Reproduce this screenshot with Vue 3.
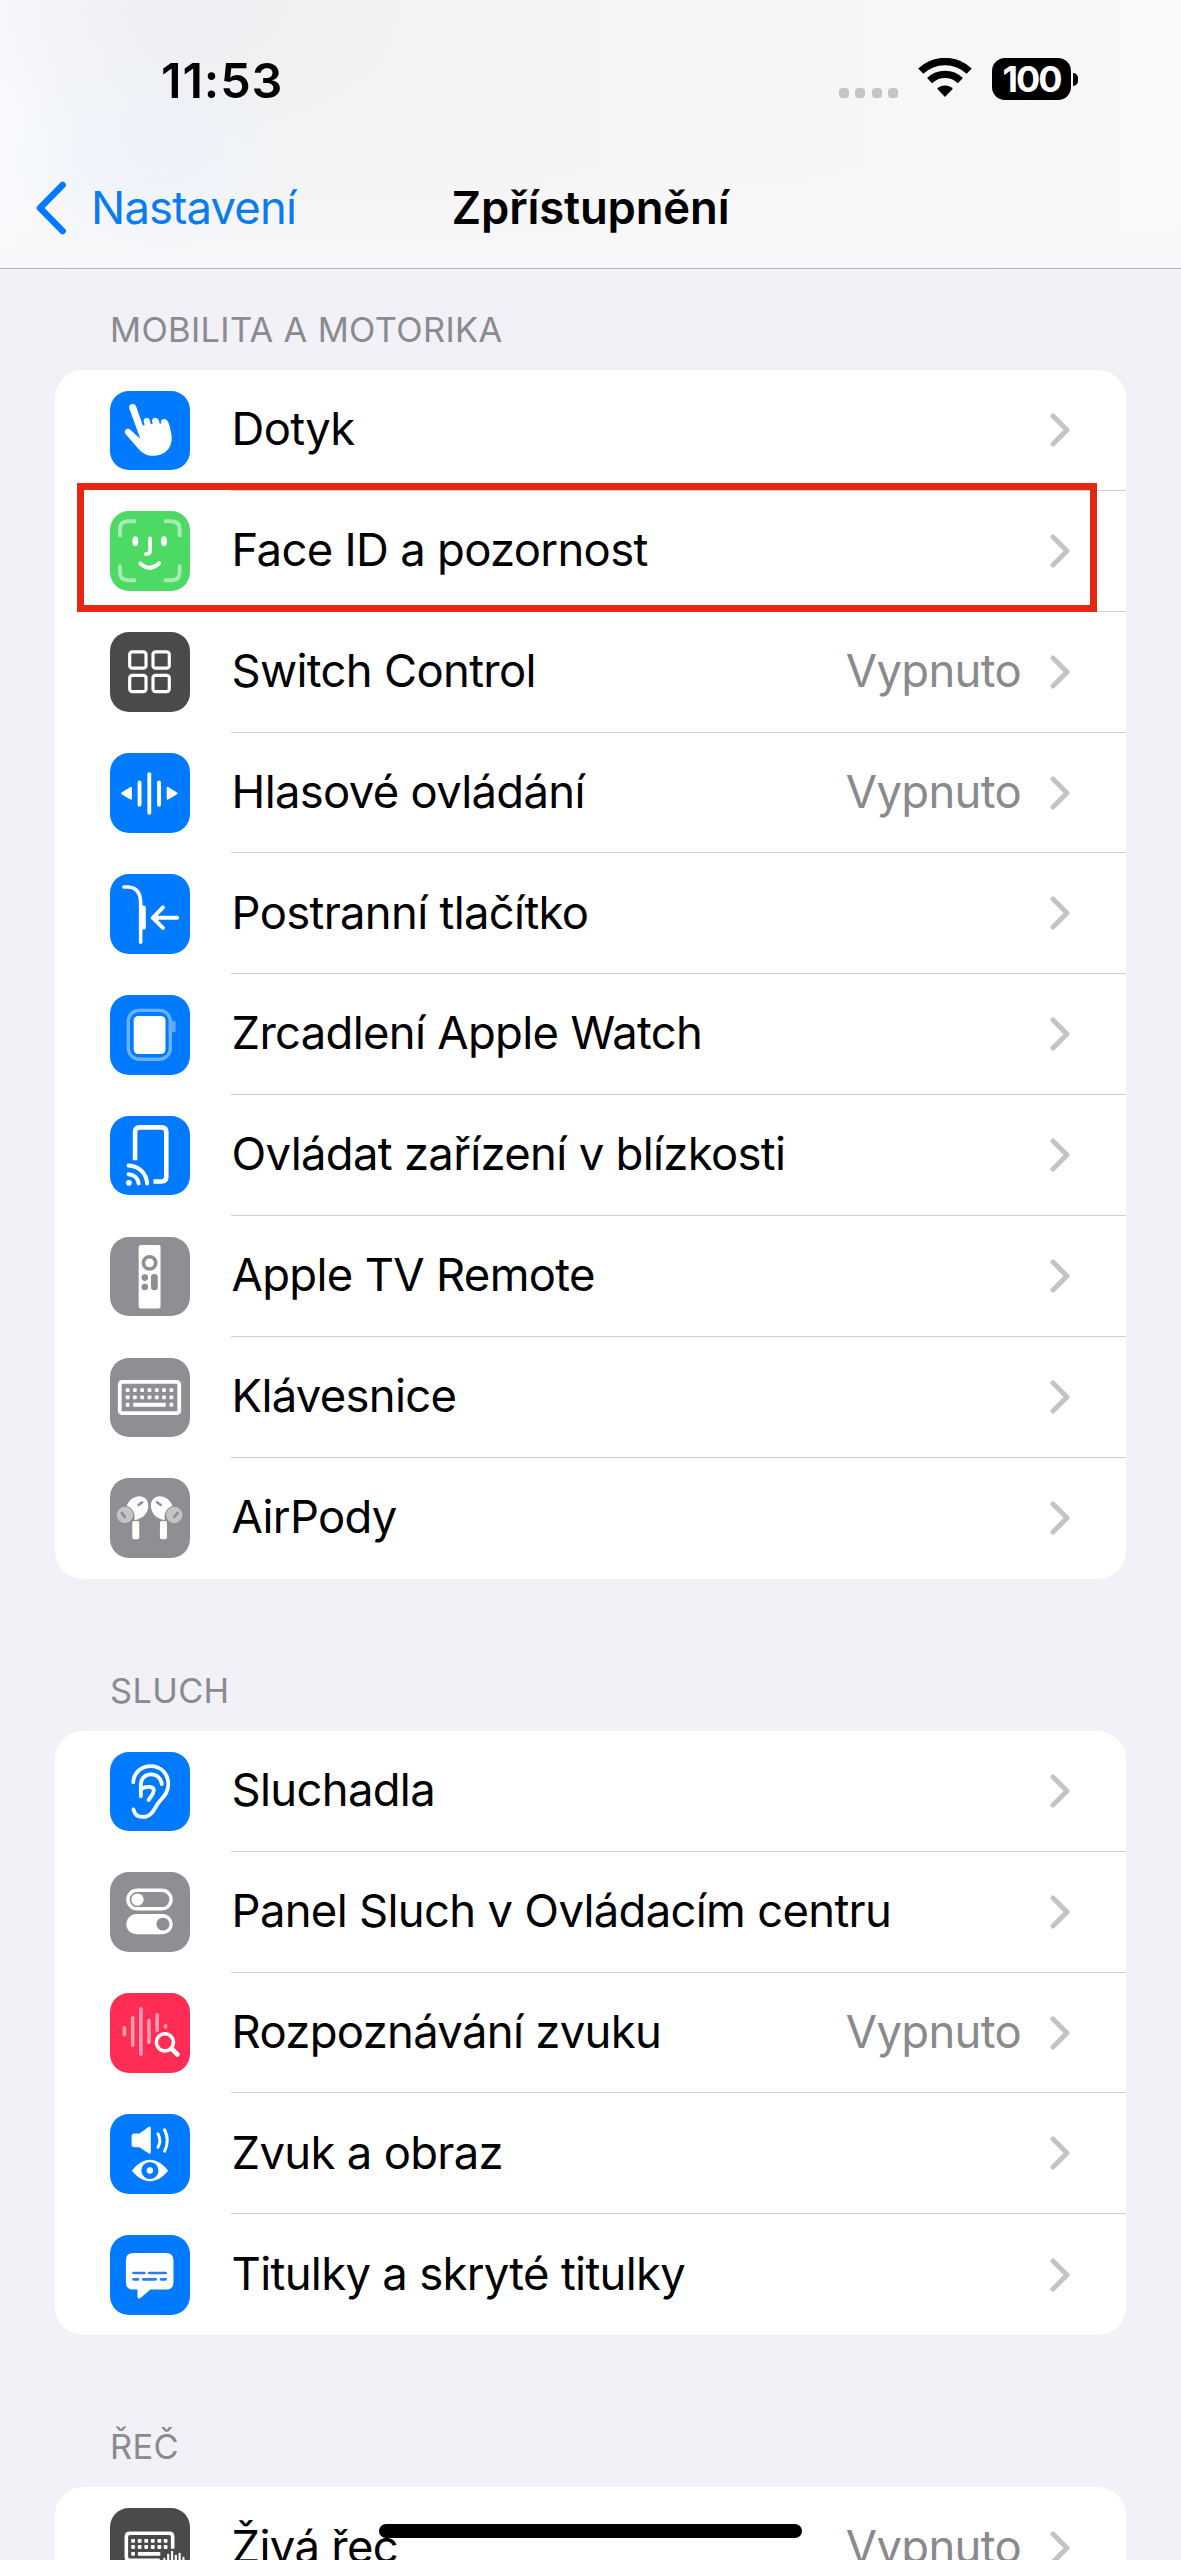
<script setup>
const keyCap = (x, y) => `<rect x="${x - 1.9}" y="${y - 1.9}" width="3.8" height="3.8" rx=".8" fill="#fff"/>`
const bar = (x, y1, y2, color, w = 3.6) =>
  `<path d="M${x} ${y1 + w / 2}V${y2 - w / 2}" stroke="${color}" stroke-width="${w}" stroke-linecap="round"/>`
const cols7 = [17.7, 25, 32.3, 39.7, 47, 54.3, 61.7]
const cols6 = [23.2, 29.8, 36.4, 43, 49.6, 55.9]

const bud = `<path d="M16.8 28C19.5 21 25 18.3 30 18.3C35.5 18.6 38.5 22.8 38.5 27.6C38.5 35 33 41.2 24.6 42.2C25.6 35 22.5 30 16.8 28Z" fill="#fff"/>
  <rect x="22.4" y="43.2" width="7" height="18.3" rx="1.8" fill="#fff"/>
  <circle cx="15" cy="37.2" r="8.2" fill="#c4c4c7"/>
  <path d="M11.8 35.2L15 39.2" stroke="#8e8e93" stroke-width="2.8" stroke-linecap="round"/>
  <path d="M28.6 27.2L32.4 24.4" stroke="#8e8e93" stroke-width="2.4" stroke-linecap="round"/>`

const glyphs = {
  touch: `<path fill="#fff" d="M19.3 17.2C18.4 12.8 24.6 11.4 26.2 15.4L33 34.8L34.8 34.2L33.8 30.5C33.8 26.3 39 25.8 40 29.5L41 33.3L43 32.8L42.2 30C42.6 26 48 25.8 49 29.5L50 32.8L51.7 32.3L51.2 30.5C52.4 27 57.4 27.2 59 32.5C60.5 37.5 62 43 62 48C62 58 54.5 65.2 43.5 65.2C36 65.2 31 61.4 26.5 55.7L15.6 43.2C13.2 39.6 17.4 36.4 20.5 39L30.5 48.3Z"/>`,
  face: `<g fill="none" stroke="#fff" stroke-width="4" stroke-linecap="round">
    <path opacity=".5" d="M10 24.5V18.5Q10 10.3 18.2 10.3H24.5M56 10.3H62Q70 10.3 70 18.5V24.5M70 55.5V61.3Q70 69.5 62 69.5H56M24.5 69.5H18.2Q10 69.5 10 61.3V55.5"/>
    <path d="M40.3 27.6V39.8Q40.3 43.3 36 43.3" stroke-width="3.8"/><path d="M30.4 52.6Q39.8 61.4 49.4 52.6"/></g>
    <ellipse cx="25.4" cy="30.3" rx="3" ry="5" fill="#fff"/><ellipse cx="54.2" cy="30.3" rx="3" ry="5" fill="#fff"/>`,
  grid: `<g fill="none" stroke="#fff" stroke-width="3.2"><rect x="19.8" y="20" width="16.4" height="16.4" rx="2.6"/><rect x="43.2" y="20" width="16.4" height="16.4" rx="2.6"/><rect x="19.8" y="43.6" width="16.4" height="16.4" rx="2.6"/><rect x="43.2" y="43.6" width="16.4" height="16.4" rx="2.6"/></g>`,
  voice: bar(29.7, 27.7, 53.9, '#fff', 3.9) + bar(39.5, 19.3, 62, '#fff', 3.9) + bar(49.3, 27.7, 53.9, '#fff', 3.9) +
    `<g fill="#fff" stroke="#fff" stroke-width="2" stroke-linejoin="round"><path d="M12.2 40.5L21 35V46Z"/><path d="M66.8 40.5L58 35V46Z"/></g>`,
  side: `<g fill="none" stroke="#fff" stroke-linecap="round" stroke-linejoin="round"><path stroke-width="3.6" d="M14 13.1H18Q30.8 13.6 30.8 29V68.5"/><path stroke-width="4" d="M67.5 44H43.5M53.2 33.6L43 44L53.2 54.2"/></g><rect x="30" y="31.7" width="6" height="24.2" rx="2" fill="#fff"/>`,
  watch: `<rect x="18.4" y="15.4" width="42.2" height="49.2" rx="11" fill="none" stroke="#6ab2ff" stroke-width="3.4"/><rect x="61.4" y="26" width="4.6" height="11.6" rx="2" fill="#5aa9ff"/><rect x="23.8" y="21" width="32" height="38.4" rx="4.5" fill="#fff"/>`,
  nearby: `<g fill="none" stroke="#fff" stroke-width="4.6"><path d="M25.2 44.5V16.2Q25.2 11.4 30 11.4H51.8Q56.6 11.4 56.6 16.2V61Q56.6 65.8 51.8 65.8H43.6"/></g><g fill="none" stroke="#fff" stroke-width="4" stroke-linecap="round"><path d="M18.6 49.8C29.5 50.6 36.6 57.6 37.4 67.9"/><path d="M18.6 58.5C24.2 58.9 28.2 62.6 28.8 67.9"/></g><circle cx="19" cy="67.2" r="2.9" fill="#fff"/>`,
  remote: `<rect x="28.8" y="8" width="22" height="63.8" rx="2" fill="#fff"/><circle cx="39.8" cy="26" r="6.2" fill="none" stroke="#8e8e93" stroke-width="3.6"/><g fill="#8e8e93"><circle cx="35" cy="40.8" r="3.3"/><circle cx="35" cy="50.2" r="3.3"/><rect x="41.2" y="37.2" width="6.8" height="16.3" rx="3.2"/></g>`,
  keyboard: `<rect x="9.8" y="23.9" width="59.8" height="31.6" rx="2.6" fill="none" stroke="#fff" stroke-width="3.8"/>` +
    cols7.map(x => keyCap(x, 32.2) + keyCap(x, 39.5)).join('') + keyCap(17.7, 47) + keyCap(61.7, 47) +
    `<rect x="23.3" y="45.1" width="32.8" height="3.8" rx=".8" fill="#fff"/>`,
  airpods: bud + `<g transform="translate(79.6 0) scale(-1 1)">${bud}</g>`,
  ear: `<g fill="none" stroke="#fff" stroke-width="3.8" stroke-linecap="round" stroke-linejoin="round"><path d="M23.4 30.4C24 20.5 31.5 14.2 41 14.2C51.3 14.2 58.6 22 58.6 32.5C58.6 42.5 51.5 46.5 47 53.5C43 60.8 40 65.2 32.8 65.2C28 65.2 24.6 62.3 23.6 57.6"/><path d="M31 44.6V32.5C31 26.5 35.5 22.4 41.2 22.4C47 22.4 51.6 26.5 52 32.3"/><path d="M31 37.2C36 34.4 44.2 34 44 38.8C43.8 43 40.4 45 38.8 48.4"/></g>`,
  toggles: `<rect x="18" y="18.4" width="43.4" height="18.6" rx="9.3" fill="none" stroke="#fff" stroke-width="3.4"/><circle cx="27.6" cy="27.8" r="6.2" fill="#fff"/><rect x="16.3" y="42.3" width="46.8" height="20.2" rx="10.1" fill="#fff"/><circle cx="53.2" cy="52.4" r="6.5" fill="#8e8e93"/>`,
  recognition: [[14.5, 33, 43.8], [22.8, 23, 54.2], [31, 14, 63.4], [39.2, 26, 51.4], [47.4, 20, 40], [55.8, 31.2, 36]].map(b => bar(...b, '#ff9fb2')).join('') +
    `<circle cx="55.2" cy="49.6" r="9.2" fill="#ff2d55" stroke="#ff2d55" stroke-width="7"/><circle cx="55.2" cy="49.6" r="8.6" fill="none" stroke="#fff" stroke-width="3.6"/><path d="M61.6 55.8L67.8 61.8" stroke="#fff" stroke-width="4.6" stroke-linecap="round"/>`,
  soundvision: `<path d="M21.7 22.4Q21.7 19.6 24.5 19.6H29.6L39 12.9Q41 12 41 14.4V38.2Q41 40.6 39 39.6L29.6 33.4H24.5Q21.7 33.4 21.7 30.6Z" fill="#fff"/><g fill="none" stroke="#fff" stroke-width="3" stroke-linecap="round"><path d="M48.2 20Q52 26.6 48.2 33.4"/><path d="M54.8 15.8Q60.4 26.4 54.8 37.4"/></g><path d="M22 57C28 49.5 34 46 40.2 46C46.4 46 52.4 49.5 58.4 57C52.4 64.2 46.4 67.5 40.2 67.5C34 67.5 28 64.2 22 57Z" fill="#fff"/><circle cx="40.1" cy="56.8" r="8.6" fill="#007aff"/><circle cx="40.1" cy="56.8" r="3.2" fill="#fff"/>`,
  captions: `<path d="M23.5 18H56.3Q63.8 18 63.8 25.5V47.4Q63.8 54.9 56.3 54.9H40.5L31 63Q27.6 65.4 27.6 61.6V54.9H23.5Q16 54.9 16 47.4V25.5Q16 18 23.5 18Z" fill="#fff"/><path d="M23.6 38.2H34.6M39.4 38.2H56M23.6 44.6H28.2M33.4 44.6H46M51.2 44.6H56" stroke="#2b7fe0" stroke-width="2.6" stroke-linecap="round"/>`,
  live: `<path d="M63 41V29Q63 25.4 59.4 25.4H20Q16.4 25.4 16.4 29V49Q16.4 52.6 20 52.6H50" fill="none" stroke="#fff" stroke-width="3.6"/>` +
    cols6.map(x => keyCap(x, 33) + keyCap(x, 39.2)).join('') + keyCap(23.2, 46) +
    `<rect x="28" y="44.2" width="22.6" height="3.7" rx=".8" fill="#fff"/>` +
    [[54.6, 50], [58.5, 46], [62.4, 43], [66.2, 47], [70, 45], [73.8, 49]].map(([x, y]) => bar(x, y, 62, '#fff', 2.2)).join('')
}

const sections = [
  {
    title: 'MOBILITA A MOTORIKA',
    rows: [
      { label: 'Dotyk', icon: 'touch', tone: 'blue' },
      { label: 'Face ID a pozornost', icon: 'face', tone: 'green', marked: true },
      { label: 'Switch Control', icon: 'grid', tone: 'dark', value: 'Vypnuto' },
      { label: 'Hlasové ovládání', icon: 'voice', tone: 'blue', value: 'Vypnuto' },
      { label: 'Postranní tlačítko', icon: 'side', tone: 'blue' },
      { label: 'Zrcadlení Apple Watch', icon: 'watch', tone: 'blue' },
      { label: 'Ovládat zařízení v blízkosti', icon: 'nearby', tone: 'blue' },
      { label: 'Apple TV Remote', icon: 'remote', tone: 'gray' },
      { label: 'Klávesnice', icon: 'keyboard', tone: 'gray' },
      { label: 'AirPody', icon: 'airpods', tone: 'gray' }
    ]
  },
  {
    title: 'SLUCH',
    rows: [
      { label: 'Sluchadla', icon: 'ear', tone: 'blue' },
      { label: 'Panel Sluch v Ovládacím centru', icon: 'toggles', tone: 'gray' },
      { label: 'Rozpoznávání zvuku', icon: 'recognition', tone: 'pink', value: 'Vypnuto' },
      { label: 'Zvuk a obraz', icon: 'soundvision', tone: 'blue' },
      { label: 'Titulky a skryté titulky', icon: 'captions', tone: 'blue' }
    ]
  },
  {
    title: 'ŘEČ',
    rows: [{ label: 'Živá řeč', icon: 'live', tone: 'dark', value: 'Vypnuto' }]
  }
]
</script>

<template>
  <div class="screen">
    <header class="top">
      <div class="status">
        <span class="time">11:53</span>
        <div class="indicators">
          <div class="signal"><i v-for="n in 4" :key="n"></i></div>
          <svg class="wifi" width="54" height="40" viewBox="0 0 54 40">
            <g fill="none" stroke="#000">
              <path d="M2.8 13.2A35 35 0 0 1 51.2 13.2" stroke-width="7.4" />
              <path d="M11.6 22.6A22 22 0 0 1 42.4 22.6" stroke-width="7.2" />
            </g>
            <path d="M27 39L19.2 30.8A11 11 0 0 1 34.8 30.8Z" />
          </svg>
          <div class="battery"><span>100</span></div>
          <i class="nub"></i>
        </div>
      </div>
      <nav class="nav">
        <a class="back">
          <svg width="32" height="54" viewBox="0 0 32 54">
            <path d="M27.6 4L5 27L27.6 50" fill="none" stroke="#007aff" stroke-width="6.6" stroke-linecap="round" stroke-linejoin="round" />
          </svg>
          <span>Nastavení</span>
        </a>
        <h1>Zpřístupnění</h1>
      </nav>
    </header>

    <main>
      <section v-for="s in sections" :key="s.title">
        <h2>{{ s.title }}</h2>
        <ul>
          <li v-for="r in s.rows" :key="r.label">
            <span class="icon" :class="r.tone">
              <svg viewBox="0 0 80 80" v-html="glyphs[r.icon]"></svg>
            </span>
            <div class="body">
              <span class="label">{{ r.label }}</span>
              <span v-if="r.value" class="value">{{ r.value }}</span>
              <svg class="chev" width="22" height="36" viewBox="0 0 22 36">
                <path d="M4 4L18 18L4 32" fill="none" stroke="#c4c4c6" stroke-width="5" stroke-linecap="round" stroke-linejoin="round" />
              </svg>
            </div>
            <div v-if="r.marked" class="mark"></div>
          </li>
        </ul>
      </section>
    </main>
    <div class="home"></div>
  </div>
</template>

<style>
body { margin: 0; background: #f1f1f7; }
</style>

<style scoped>
.screen {
  position: relative;
  width: 1181px;
  height: 2560px;
  overflow: hidden;
  background: #f1f1f7;
  color: #000;
  font-family: Inter, "Liberation Sans", sans-serif;
}
.top {
  box-sizing: border-box;
  height: 269px;
  border-bottom: 1px solid #b5b5b8;
  background:
    radial-gradient(ellipse 150px 100px at 155px 155px, rgba(235, 242, 252, .7), rgba(235, 242, 252, 0)),
    radial-gradient(ellipse 260px 150px at 190px 10px, rgba(236, 238, 241, .8), rgba(236, 238, 241, 0)),
    linear-gradient(to bottom, rgba(248, 248, 250, 0) 60%, #f8f8fa),
    linear-gradient(to right, #f8fafd 0, #f2f3f5 150px, #f3f3f3 450px, #f6f6f6 700px, #f7f7f8 1000px, #f9f9fb 1181px);
}
.status {
  display: flex;
  justify-content: space-between;
  align-items: flex-start;
  height: 160px;
  padding: 0 103px 0 161px;
}
.time { font-size: 48.5px; font-weight: 600; line-height: 60px; margin-top: 51px; letter-spacing: .9px; }
.indicators { display: flex; margin-top: 58px; }
.signal { display: flex; gap: 6.4px; margin: 30px 20px 0 0; }
.signal i { width: 10px; height: 10px; border-radius: 3.5px; background: #c5c5c6; }
.wifi { margin-right: 20px; }
.battery {
  width: 79px;
  height: 42px;
  border-radius: 13px;
  background: #000;
  color: #fff;
  text-align: center;
  font-size: 36px;
  font-weight: 700;
  line-height: 42px;
  letter-spacing: -2px;
}
.nub { width: 5px; height: 13px; margin: 15px 0 0 2px; border-radius: 0 6px 6px 0; background: #000; }
.nav { display: grid; grid-template-columns: 1fr auto 1fr; align-items: center; height: 95px; }
.back { display: flex; align-items: center; padding-left: 35px; color: #0b7bf0; font-size: 45.4px; letter-spacing: -.8px; }
.back span { margin-left: 24px; }
h1 { margin: 0; font-size: 45.4px; font-weight: 600; letter-spacing: -.15px; }
section { padding: 0 55px; }
h2 {
  display: flex;
  align-items: flex-end;
  box-sizing: border-box;
  height: 152.3px;
  margin: 0;
  padding: 0 0 19px 55px;
  color: #8a8a8f;
  font-size: 34.4px;
  font-weight: 400;
  line-height: 42px;
  letter-spacing: .35px;
}
section:first-child h2 { height: 101px; }
ul { margin: 0; padding: 0; list-style: none; border-radius: 28px; background: #fff; }
li { position: relative; display: flex; align-items: center; height: 120.87px; padding-left: 55px; }
.icon { width: 79.6px; height: 79.6px; border-radius: 19px; overflow: hidden; }
.icon svg { display: block; width: 100%; height: 100%; }
.blue { background: #007aff; }
.green { background: #4cd964; }
.dark { background: #4a4a4b; }
.gray { background: #8e8e93; }
.pink { background: #ff2d55; }
.body {
  box-sizing: border-box;
  flex: 1;
  display: flex;
  align-items: center;
  height: 100%;
  margin-left: 41px;
  padding-right: 55px;
  border-bottom: 1px solid #cfcfd1;
}
li:last-child .body { border-bottom: 0; }
.label, .value { font-size: 45.4px; line-height: 56px; padding-bottom: 1.6px; letter-spacing: -.68px; white-space: nowrap; }
.label { padding-left: 1px; }
.value { margin-left: auto; color: #8a8a8d; }
.chev { margin-left: auto; }
.value + .chev { margin-left: 28px; }
.mark {
  position: absolute;
  box-sizing: border-box;
  left: 22px;
  top: -7.6px;
  width: 1020px;
  height: 128.6px;
  border: 7.4px solid #e62713;
}
.home {
  position: absolute;
  left: 379px;
  top: 2524px;
  width: 423px;
  height: 14px;
  border-radius: 7px;
  background: #000;
}
</style>
